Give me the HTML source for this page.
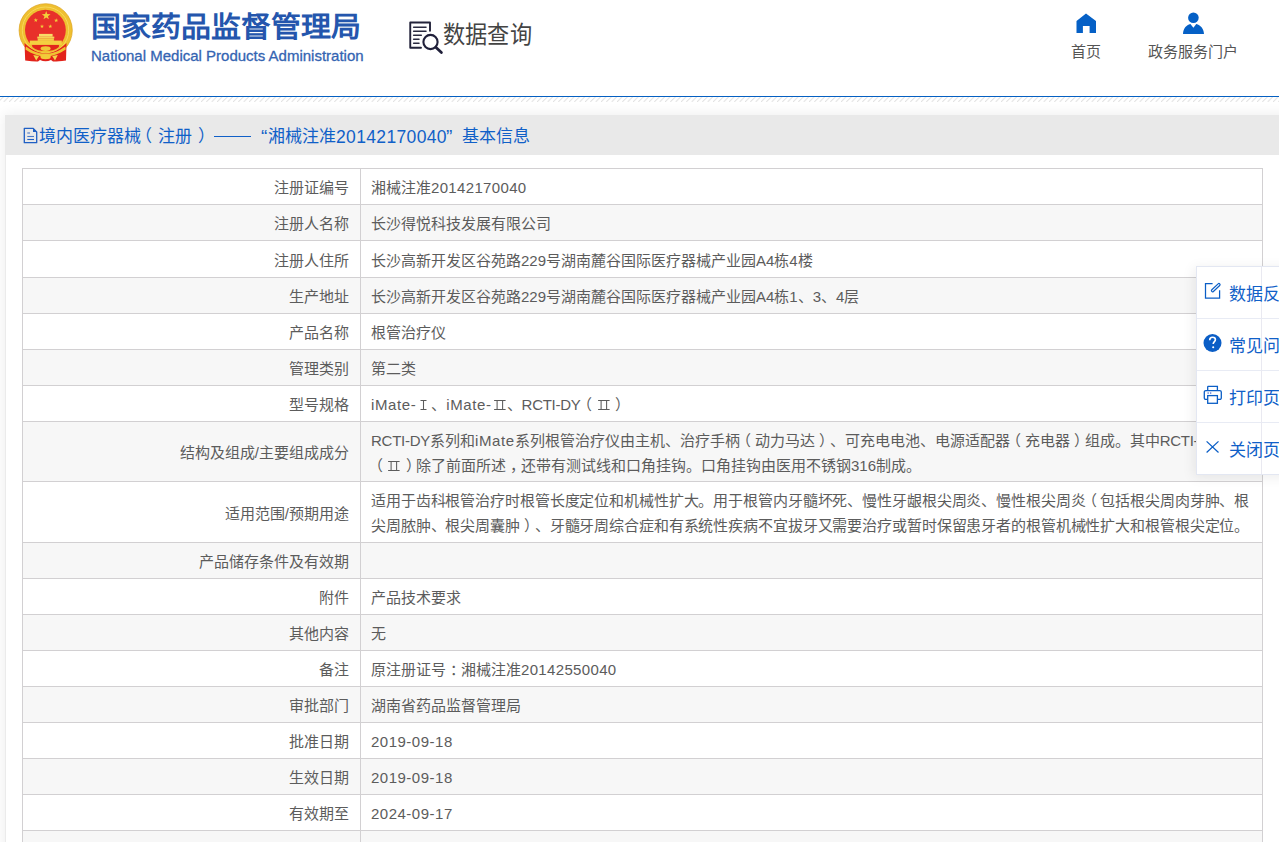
<!DOCTYPE html>
<html lang="zh-CN">
<head>
<meta charset="utf-8">
<style>
html,body{margin:0;padding:0;background:#fff;}
body{width:1279px;height:842px;overflow:hidden;position:relative;text-spacing-trim:space-all;font-family:"Liberation Sans",sans-serif;font-size:15px;color:#5c5c5c;}
.a{position:absolute;white-space:nowrap;}
/* header */
#site-title{left:91px;top:7px;font-size:30px;font-weight:bold;color:#2456ad;line-height:44px;transform:scaleY(0.95);transform-origin:0 0;}
#site-en{left:91px;top:46.5px;font-size:15px;color:#3464b2;line-height:18px;-webkit-text-stroke:0.3px #3464b2;}
#dq-text{left:443px;top:19px;font-size:24px;color:#444;line-height:32px;transform:scaleX(0.925);transform-origin:0 0;}
.nav-t{font-size:15px;color:#555;line-height:20px;}
#blue-line{left:0;top:96px;width:1279px;height:1px;background:#0560c2;}
#stripes{left:0;top:97px;width:1279px;height:5px;}
#card{left:5px;top:115px;width:1290px;height:760px;background:#fff;box-shadow:0 0 12px 1px rgba(0,0,0,0.07);border-left:1px solid #ebebeb;box-sizing:border-box;}
#bar{left:5px;top:115px;width:1274px;height:40px;background:#e9e9e9;}
.bt{top:125px;font-size:17px;color:#1060c8;line-height:24px;}
.bn{font-size:17.5px;letter-spacing:0.35px;}
.bq{font-size:19px;}
/* table */
.row{position:absolute;left:23px;width:1239px;}
.g{background:#f7f7f7;}
.hl{position:absolute;left:22px;width:1241px;height:1px;background:#d2d0d2;}
.vl{position:absolute;top:168px;width:1px;height:700px;background:#d2d0d2;}
.lab{position:absolute;right:930px;text-align:right;white-space:nowrap;line-height:25px;}
.val{position:absolute;left:371px;white-space:nowrap;line-height:25px;}
.lp{position:relative;left:-3.5px;}
.rp{position:relative;left:4.5px;}
.cm{position:relative;left:3.5px;}
.cl{position:relative;left:4px;}
.r1,.r2{display:inline-block;width:15px;height:0;position:relative;}
.r1 svg,.r2 svg{position:absolute;left:0;bottom:-1px;}
/* float panel */
#panel{left:1196px;top:266px;width:100px;height:207px;background:#fff;border:1px solid #e3e7f2;box-shadow:-2px 2px 12px rgba(0,0,0,0.08);}
.pi{position:absolute;left:0;width:100px;height:52px;}
.sep{position:absolute;left:0;width:100px;height:1px;background:#e8ebf4;}
.vline{position:absolute;left:64px;top:0;width:1px;height:207px;background:#e9e9f1;}
.pt{position:absolute;left:32px;font-size:17px;color:#1060c8;line-height:24px;white-space:nowrap;}
</style>
</head>
<body>
<!-- header -->
<svg class="a" style="left:18px;top:3px" width="56" height="60" viewBox="0 0 56 60">
  <circle cx="27.7" cy="27.3" r="26.6" fill="#efc030" stroke="#dca21e" stroke-width="0.7"/>
  <circle cx="27.5" cy="27.2" r="23.2" fill="none" stroke="#f7d85a" stroke-width="1"/>
  <circle cx="27.4" cy="27.1" r="20.4" fill="#e8302a"/>
  <polygon points="28.20,8.00 29.28,11.11 32.57,11.18 29.95,13.17 30.90,16.32 28.20,14.44 25.50,16.32 26.45,13.17 23.83,11.18 27.12,11.11" fill="#f2cf3a"/>
  <polygon points="17.80,15.00 18.32,16.49 19.89,16.52 18.64,17.47 19.09,18.98 17.80,18.08 16.51,18.98 16.96,17.47 15.71,16.52 17.28,16.49" fill="#f2cf3a"/>
  <polygon points="38.20,15.20 38.72,16.69 40.29,16.72 39.04,17.67 39.49,19.18 38.20,18.28 36.91,19.18 37.36,17.67 36.11,16.72 37.68,16.69" fill="#f2cf3a"/>
  <polygon points="24.00,21.30 24.49,22.72 26.00,22.75 24.80,23.66 25.23,25.10 24.00,24.24 22.77,25.10 23.20,23.66 22.00,22.75 23.51,22.72" fill="#f2cf3a"/>
  <polygon points="32.30,21.30 32.79,22.72 34.30,22.75 33.10,23.66 33.53,25.10 32.30,24.24 31.07,25.10 31.50,23.66 30.30,22.75 31.81,22.72" fill="#f2cf3a"/>
  <rect x="21" y="30.9" width="13.6" height="2.8" fill="#f8dc68"/>
  <rect x="19.3" y="33.6" width="17" height="1.8" fill="#f5d455"/>
  <rect x="19.7" y="35.3" width="16.2" height="2.6" fill="#f3cd45"/>
  <rect x="11.8" y="37.6" width="32" height="4.3" fill="#f4d040"/>
  <path d="M6.5 40 C13 46.5 20 50 27.6 50.5 C35.2 50 42 46.5 48.5 40 L48 57.5 Q38 58.8 35 58.5 L33 57 Q27.6 59.5 22 57 L20 58.5 Q16 58.8 7.2 57.5 Z" fill="#e2231b"/>
  <path d="M8 43.5 C14 48 20 50.5 27.6 50.8 C35.2 50.5 41.2 48 47.3 43.5 L47.8 46.5 C41 51 35 53.3 27.6 53.6 C20.2 53.3 14 51 7.4 46.5 Z" fill="#efc232"/>
  <path d="M14.3 44 C18 47 22 48 27.6 48 C33.2 48 37.2 47 40.9 44 L40.9 42 H14.3 Z" fill="#e2261c"/>
  <ellipse cx="27.6" cy="45.6" rx="5" ry="2.4" fill="#f0c738"/>
  <ellipse cx="27.6" cy="53.8" rx="5.2" ry="2.5" fill="#f2ca3a"/>
  <path d="M15.3 52 L21 53 L18.2 57.6 Z M39.8 52 L34.2 53 L37 57.6 Z" fill="#f3d44a"/>
</svg>
<div id="site-title" class="a">国家药品监督管理局</div>
<div id="site-en" class="a">National Medical Products Administration</div>

<svg class="a" style="left:406px;top:18px" width="40" height="38" viewBox="0 0 40 38">
  <path d="M15 29.75 H4.25 V4.5 H24 V12.75" fill="none" stroke="#23233a" stroke-width="1.9" stroke-linejoin="round" stroke-linecap="round"/>
  <g stroke="#2a2a40" stroke-width="1.5" stroke-linecap="round">
    <line x1="7.6" y1="9.25" x2="20" y2="9.25"/><line x1="7.6" y1="13.25" x2="20" y2="13.25"/>
    <line x1="7.6" y1="17.25" x2="15.3" y2="17.25"/><line x1="7.6" y1="21.25" x2="13" y2="21.25"/><line x1="7.6" y1="25.25" x2="13" y2="25.25"/>
  </g>
  <circle cx="24.5" cy="24" r="7.1" fill="none" stroke="#20203a" stroke-width="2.1"/>
  <line x1="29.8" y1="29.3" x2="35.4" y2="34.6" stroke="#20203a" stroke-width="2.8" stroke-linecap="round"/>
</svg>
<div id="dq-text" class="a">数据查询</div>

<svg class="a" style="left:1076px;top:13px" width="21" height="21" viewBox="0 0 21 21">
  <path d="M10 0.5 L20 8 V20 H13.6 V13 H6.9 V20 H0.5 V8 Z" fill="#0560c6"/>
</svg>
<div class="a nav-t" style="left:1071px;top:41.5px">首页</div>
<svg class="a" style="left:1182px;top:12px" width="24" height="23" viewBox="0 0 24 23">
  <circle cx="11.4" cy="5.7" r="5.3" fill="#0560c6"/>
  <path d="M1 21.9 C1.2 16.8 4.2 12.9 8.4 12 L11.4 15.8 L14.3 12 C18.4 12.9 21.8 16.8 22 21.9 Z" fill="#0560c6"/>
</svg>
<div class="a nav-t" style="left:1148px;top:41.5px">政务服务门户</div>

<div id="blue-line" class="a"></div>
<svg id="stripes" class="a" width="1279" height="5">
  <defs><pattern id="st" width="5.3333" height="5" patternUnits="userSpaceOnUse" x="-1.7"><path d="M0 5 L5 0" stroke="#dedede" stroke-width="0.9"/></pattern></defs>
  <rect width="1279" height="5" fill="url(#st)"/>
</svg>

<div id="card" class="a"></div>
<div id="bar" class="a"></div>
<svg class="a" style="left:23px;top:127px" width="16" height="17" viewBox="0 0 16 17">
  <path d="M1.3 1.3 H10 L13.7 5 V15.7 H1.3 Z" fill="none" stroke="#1f5fc4" stroke-width="1.3" stroke-linejoin="round"/>
  <path d="M10 1.3 L13.7 5 H10 Z" fill="#1f5fc4"/>
  <line x1="4.3" y1="6" x2="7" y2="6" stroke="#4a78c8" stroke-width="1.1"/>
  <line x1="4.3" y1="9.5" x2="11" y2="9.5" stroke="#4a78c8" stroke-width="1.1"/>
  <line x1="4.3" y1="12.5" x2="11" y2="12.5" stroke="#1f5fc4" stroke-width="1.1"/>
</svg>
<div class="a bt" style="left:39px">境内医疗器械<span style="position:relative;left:-6px">（</span>注册<span style="position:relative;left:5.5px">）</span></div>
<div class="a" style="left:214px;top:136px;width:37px;height:1px;background:#1060c8"></div>
<div class="a bt bq" style="left:261px">“</div>
<div class="a bt" style="left:267.5px">湘械注准</div>
<div class="a bt bn" style="left:336px">20142170040</div>
<div class="a bt bq" style="left:446px">”</div>
<div class="a bt" style="left:462px">基本信息</div>

<!-- TABLE -->
<div id="tbl">
<div class="row" style="top:169px;height:35px"></div>
<div class="row g" style="top:205px;height:35px"></div>
<div class="row" style="top:241px;height:36px"></div>
<div class="row g" style="top:278px;height:35px"></div>
<div class="row" style="top:314px;height:35px"></div>
<div class="row g" style="top:350px;height:35px"></div>
<div class="row" style="top:386px;height:35px"></div>
<div class="row g" style="top:422px;height:59px"></div>
<div class="row" style="top:482px;height:60px"></div>
<div class="row g" style="top:543px;height:35px"></div>
<div class="row" style="top:579px;height:35px"></div>
<div class="row g" style="top:615px;height:35px"></div>
<div class="row" style="top:651px;height:35px"></div>
<div class="row g" style="top:687px;height:35px"></div>
<div class="row" style="top:723px;height:35px"></div>
<div class="row g" style="top:759px;height:35px"></div>
<div class="row" style="top:795px;height:35px"></div>
<div class="row g" style="top:831px;height:35px"></div>
<div class="hl" style="top:168px"></div>
<div class="hl" style="top:204px"></div>
<div class="hl" style="top:240px"></div>
<div class="hl" style="top:277px"></div>
<div class="hl" style="top:313px"></div>
<div class="hl" style="top:349px"></div>
<div class="hl" style="top:385px"></div>
<div class="hl" style="top:421px"></div>
<div class="hl" style="top:481px"></div>
<div class="hl" style="top:542px"></div>
<div class="hl" style="top:578px"></div>
<div class="hl" style="top:614px"></div>
<div class="hl" style="top:650px"></div>
<div class="hl" style="top:686px"></div>
<div class="hl" style="top:722px"></div>
<div class="hl" style="top:758px"></div>
<div class="hl" style="top:794px"></div>
<div class="hl" style="top:830px"></div>
<div class="hl" style="top:866px"></div>
<div class="vl" style="left:22px"></div>
<div class="vl" style="left:360px"></div>
<div class="vl" style="left:1262px"></div>
<div class="lab" style="top:175.0px">注册证编号</div>
<div class="val" style="top:175.0px">湘械注准<span style="letter-spacing:0.34px">20142170040</span></div>
<div class="lab" style="top:211.0px">注册人名称</div>
<div class="val" style="top:211.0px">长沙得悦科技发展有限公司</div>
<div class="lab" style="top:247.5px">注册人住所</div>
<div class="val" style="top:247.5px">长沙高新开发区谷苑路229号湖南麓谷国际医疗器械产业园A4栋4楼</div>
<div class="lab" style="top:284.0px">生产地址</div>
<div class="val" style="top:284.0px">长沙高新开发区谷苑路229号湖南麓谷国际医疗器械产业园A4栋1、3、4层</div>
<div class="lab" style="top:320.0px">产品名称</div>
<div class="val" style="top:320.0px">根管治疗仪</div>
<div class="lab" style="top:356.0px">管理类别</div>
<div class="val" style="top:356.0px">第二类</div>
<div class="lab" style="top:392.0px">型号规格</div>
<div class="val" style="top:392.0px"><span style="letter-spacing:0.6px"><span style="letter-spacing:0.6px">iMate</span>-</span><span class="r1"><svg width="15" height="12" viewBox="0 0 15 12"><path d="M4.5 1.5 H10.5 M4.5 10.5 H10.5 M7.5 1.5 V10.5" stroke="#5c5c5c" stroke-width="1.05" fill="none"/></svg></span>、<span style="letter-spacing:0.6px"><span style="letter-spacing:0.6px">iMate</span>-</span><span class="r2"><svg width="15" height="12" viewBox="0 0 15 12"><path d="M2.1 1.5 H13.6 M2.1 10.5 H13.6 M5.1 1.5 V10.5 M10.6 1.5 V10.5" stroke="#5c5c5c" stroke-width="1.05" fill="none"/></svg></span>、<span style="letter-spacing:-0.27px">RCTI-DY</span><span class="lp">（</span><span class="r2"><svg width="15" height="12" viewBox="0 0 15 12"><path d="M2.1 1.5 H13.6 M2.1 10.5 H13.6 M5.1 1.5 V10.5 M10.6 1.5 V10.5" stroke="#5c5c5c" stroke-width="1.05" fill="none"/></svg></span><span class="rp">）</span></div>
<div class="lab" style="top:440.0px">结构及组成/主要组成成分</div>
<div class="val" style="top:427.5px"><span style="letter-spacing:-0.27px">RCTI-DY</span>系列和<span style="letter-spacing:0.6px">iMate</span>系列根管治疗仪由主机、治疗手柄<span class="lp">（</span>动力马达<span class="rp">）</span>、可充电电池、电源适配器<span class="lp">（</span>充电器<span class="rp">）</span>组成。其中<span style="letter-spacing:-0.27px">RCTI-DY</span><br><span class="lp">（</span><span class="r2"><svg width="15" height="12" viewBox="0 0 15 12"><path d="M2.1 1.5 H13.6 M2.1 10.5 H13.6 M5.1 1.5 V10.5 M10.6 1.5 V10.5" stroke="#5c5c5c" stroke-width="1.05" fill="none"/></svg></span><span class="rp">）</span>除了前面所述<span class="cm">，</span>还带有测试线和口角挂钩。口角挂钩由医用不锈钢316制成。</div>
<div class="lab" style="top:500.5px">适用范围/预期用途</div>
<div class="val" style="top:488.0px"><span style="letter-spacing:-0.115px">适用于齿科根管治疗时根管长度定位和机械性扩大。用于根管内牙髓坏死、慢性牙龈根尖周炎、慢性根尖周炎<span class="lp">（</span>包括根尖周肉芽肿、根<br>尖周脓肿、根尖周囊肿<span class="rp">）</span>、牙髓牙周综合症和有系统性疾病不宜拔牙又需要治疗或暂时保留患牙者的根管机械性扩大和根管根尖定位。</span></div>
<div class="lab" style="top:549.0px">产品储存条件及有效期</div>
<div class="lab" style="top:585.0px">附件</div>
<div class="val" style="top:585.0px">产品技术要求</div>
<div class="lab" style="top:621.0px">其他内容</div>
<div class="val" style="top:621.0px">无</div>
<div class="lab" style="top:657.0px">备注</div>
<div class="val" style="top:657.0px">原注册证号<span class="cl">：</span>湘械注准<span style="letter-spacing:0.34px">20142550040</span></div>
<div class="lab" style="top:693.0px">审批部门</div>
<div class="val" style="top:693.0px">湖南省药品监督管理局</div>
<div class="lab" style="top:729.0px">批准日期</div>
<div class="val" style="top:729.0px"><span style="letter-spacing:0.5px">2019-09-18</span></div>
<div class="lab" style="top:765.0px">生效日期</div>
<div class="val" style="top:765.0px"><span style="letter-spacing:0.5px">2019-09-18</span></div>
<div class="lab" style="top:801.0px">有效期至</div>
<div class="val" style="top:801.0px"><span style="letter-spacing:0.5px">2024-09-17</span></div>
</div>

<!-- float panel -->
<div id="panel" class="a">
  <div class="sep" style="top:51px"></div>
  <div class="sep" style="top:103px"></div>
  <div class="sep" style="top:155px"></div>
  <div class="vline"></div>
  <svg class="a" style="left:6px;top:11px" width="26" height="26" viewBox="0 0 26 26">
    <path d="M9.6 5.7 H2.5 V20 H16.6 V12.3" fill="none" stroke="#0b5ec6" stroke-width="1.25"/>
    <line x1="9.6" y1="12.6" x2="15.9" y2="6.7" stroke="#0b5ec6" stroke-width="3.5" stroke-linecap="round"/><line x1="9.6" y1="12.6" x2="15.9" y2="6.7" stroke="#fff" stroke-width="1.1" stroke-linecap="round"/>
  </svg>
  <div class="pt" style="top:16px">数据反馈</div>
  <svg class="a" style="left:6px;top:63px" width="26" height="26" viewBox="0 0 26 26">
    <circle cx="9.5" cy="13" r="9" fill="#0b5ec6"/>
    <path d="M6.7 10.2 C6.7 8.3 8 7.3 9.6 7.3 C11.3 7.3 12.4 8.4 12.4 9.8 C12.4 11.6 10.2 11.8 10.2 14" fill="none" stroke="#fff" stroke-width="1.6"/>
    <circle cx="10.2" cy="17.3" r="1.05" fill="#fff"/>
  </svg>
  <div class="pt" style="top:68px">常见问题</div>
  <svg class="a" style="left:6px;top:115px" width="26" height="26" viewBox="0 0 26 26">
    <path d="M4.7 4.3 H14.4 V8.5 M4.7 8.5 V4.3" fill="none" stroke="#0b5ec6" stroke-width="1.3"/>
    <path d="M4.7 17.4 H2.8 A1.5 1.5 0 0 1 1.3 15.9 V10.1 A1.5 1.5 0 0 1 2.8 8.6 H16.8 A1.5 1.5 0 0 1 18.3 10.1 V15.9 A1.5 1.5 0 0 1 16.8 17.4 H14.4" fill="none" stroke="#0b5ec6" stroke-width="1.3"/>
    <rect x="4.7" y="13.6" width="9.7" height="7.7" fill="none" stroke="#0b5ec6" stroke-width="1.3"/>
    <rect x="4.5" y="10.4" width="1.3" height="1.3" fill="#4a6ad0"/><rect x="7" y="10.4" width="1.3" height="1.3" fill="#4a6ad0"/>
  </svg>
  <div class="pt" style="top:120px">打印页面</div>
  <svg class="a" style="left:6px;top:167px" width="26" height="26" viewBox="0 0 26 26">
    <path d="M3.6 7.4 L15.5 18.5 M15.5 7.4 L3.6 18.5" fill="none" stroke="#0b5ec6" stroke-width="1.25"/>
  </svg>
  <div class="pt" style="top:172px">关闭页面</div>
</div>
</body>
</html>
